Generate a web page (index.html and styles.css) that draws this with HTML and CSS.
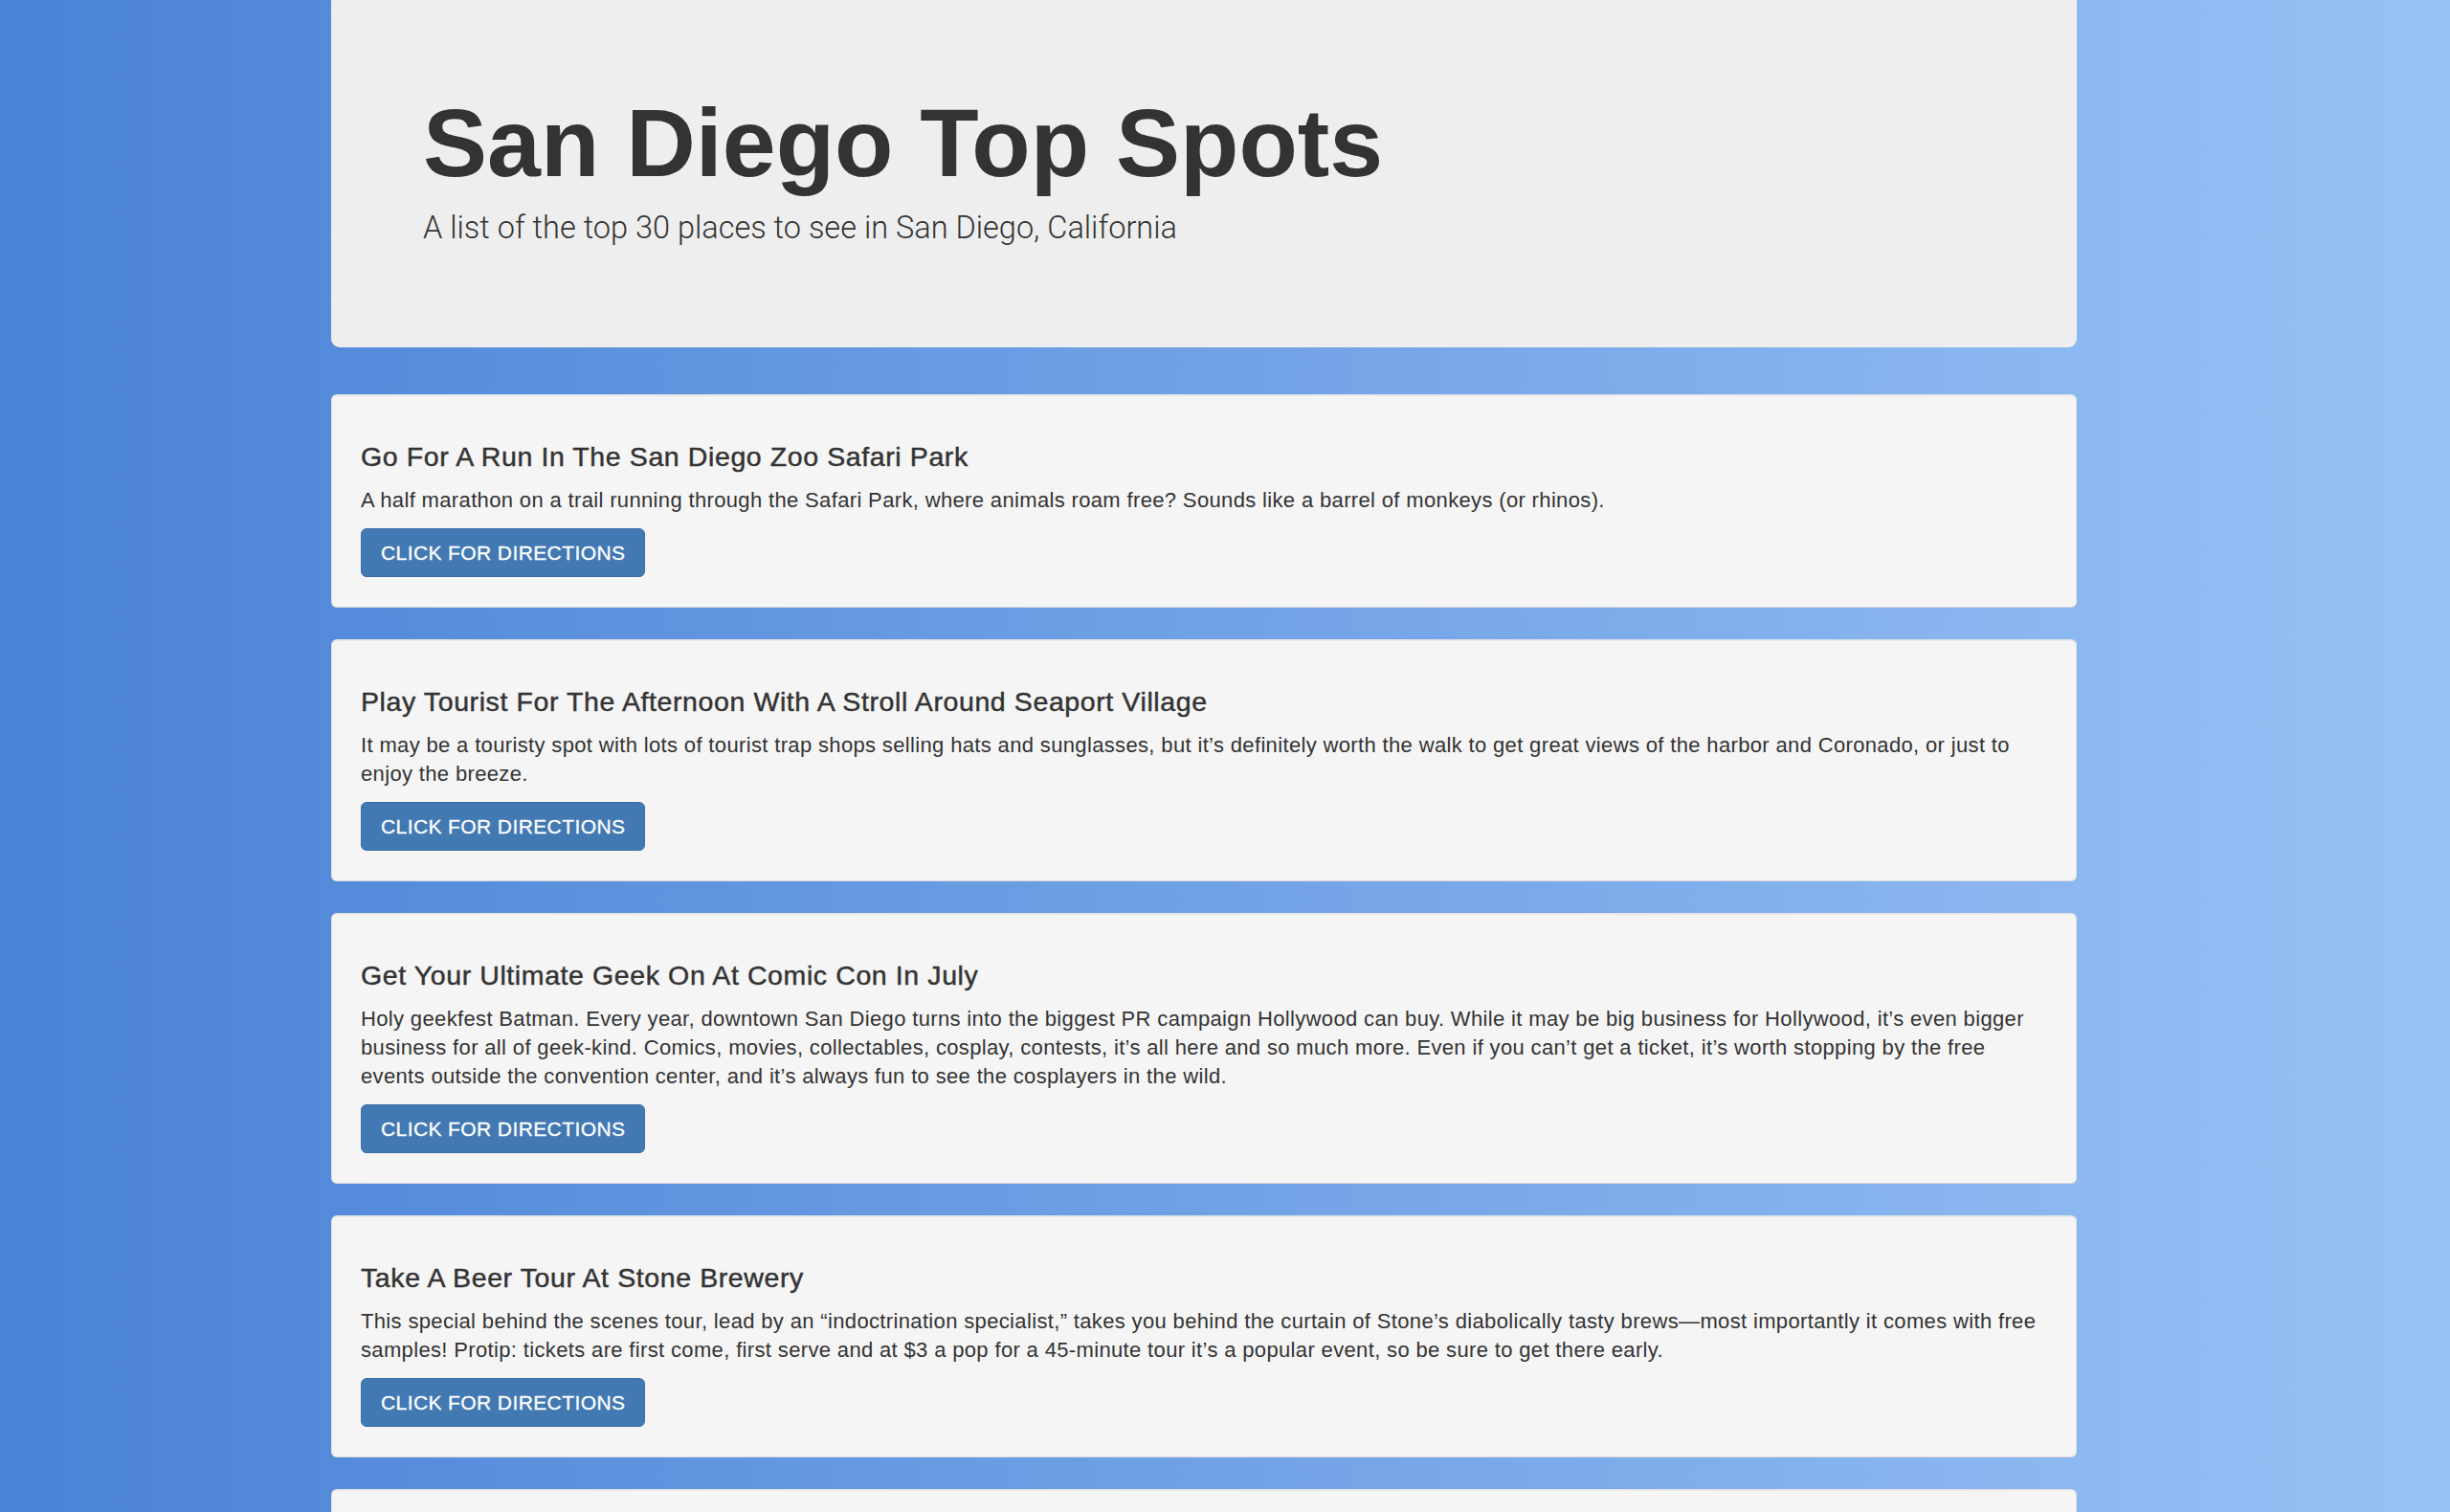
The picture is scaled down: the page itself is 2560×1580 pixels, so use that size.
FILE: index.html
```html
<!DOCTYPE html>
<html lang="en">
<head>
<meta charset="utf-8">
<title>San Diego Top Spots</title>
<link rel="stylesheet" href="styles.css">
</head>
<body>
<div class="page">
  <div class="container">
    <header class="jumbotron">
      <h1 class="title">San Diego Top Spots</h1>
      <p class="lead">A list of the top 30 places to see in San Diego, California</p>
    </header>

    <section class="spot">
      <h4 class="spot-title">Go For A Run In The San Diego Zoo Safari Park</h4>
      <p class="spot-text">A half marathon on a trail running through the Safari Park, where animals roam free? Sounds like a barrel of monkeys (or rhinos).</p>
      <a class="btn" href="#">CLICK FOR DIRECTIONS</a>
    </section>

    <section class="spot">
      <h4 class="spot-title">Play Tourist For The Afternoon With A Stroll Around Seaport Village</h4>
      <p class="spot-text">It may be a touristy spot with lots of tourist trap shops selling hats and sunglasses, but it’s definitely worth the walk to get great views of the harbor and Coronado, or just to enjoy the breeze.</p>
      <a class="btn" href="#">CLICK FOR DIRECTIONS</a>
    </section>

    <section class="spot">
      <h4 class="spot-title">Get Your Ultimate Geek On At Comic Con In July</h4>
      <p class="spot-text">Holy geekfest Batman. Every year, downtown San Diego turns into the biggest PR campaign Hollywood can buy. While it may be big business for Hollywood, it’s even bigger business for all of geek-kind. Comics, movies, collectables, cosplay, contests, it’s all here and so much more. Even if you can’t get a ticket, it’s worth stopping by the free events outside the convention center, and it’s always fun to see the cosplayers in the wild.</p>
      <a class="btn" href="#">CLICK FOR DIRECTIONS</a>
    </section>

    <section class="spot">
      <h4 class="spot-title">Take A Beer Tour At Stone Brewery</h4>
      <p class="spot-text">This special behind the scenes tour, lead by an “indoctrination specialist,” takes you behind the curtain of Stone’s diabolically tasty brews—most importantly it comes with free samples! Protip: tickets are first come, first serve and at $3 a pop for a 45-minute tour it’s a popular event, so be sure to get there early.</p>
      <a class="btn" href="#">CLICK FOR DIRECTIONS</a>
    </section>

    <section class="spot spot-next" aria-hidden="true"></section>
  </div>
</div>
</body>
</html>
```

FILE: styles.css
```css
html, body {
  margin: 0;
  padding: 0;
}

body {
  height: 1580px;
  overflow: hidden;
  background: linear-gradient(to right, #4a82d6 0%, #98c2f6 100%);
  font-family: "Liberation Sans", Arial, sans-serif;
  color: #333;
}

.page {
  padding-right: 44px;
}

.container {
  width: 1824px;
  margin: 0 auto;
}

.jumbotron {
  background: #eee;
  border-radius: 0 0 9px 9px;
  padding: 97px 90px 102px 96px;
  margin-bottom: 49px;
}

.title {
  margin: 0 0 15px;
  font-size: 100.5px;
  line-height: 104px;
  font-weight: 700;
  letter-spacing: 0;
  color: #333;
}

.lead {
  margin: 0;
  font-family: "Roboto", "Liberation Sans", sans-serif;
  font-weight: 300;
  font-size: 32.5px;
  line-height: 45px;
  color: #333;
}

.spot {
  background: #f5f5f5;
  border: 1px solid #e3e3e3;
  border-bottom-color: #d9d9d9;
  border-radius: 6px;
  box-shadow: inset 0 1px 1px rgba(0, 0, 0, 0.05);
  padding: 49px 30px 31px;
  margin-bottom: 33px;
}

.spot-next {
  min-height: 120px;
}

.spot-title {
  margin: 0 0 16px;
  font-size: 28.5px;
  line-height: 30px;
  font-weight: 400;
  letter-spacing: 0.6px;
  -webkit-text-stroke: 0.45px #333;
  color: #333;
}

.spot-text {
  margin: 0 0 14px;
  font-size: 22px;
  letter-spacing: 0.35px;
  line-height: 30px;
}

.btn {
  display: inline-flex;
  align-items: center;
  box-sizing: border-box;
  height: 51px;
  padding: 0 20px;
  background: #4279b3;
  border: 1px solid #3a6da6;
  border-radius: 6px;
  color: #fff;
  font-size: 21px;
  letter-spacing: 0.4px;
  -webkit-text-stroke: 0.3px #fff;
  text-decoration: none;
}
```
